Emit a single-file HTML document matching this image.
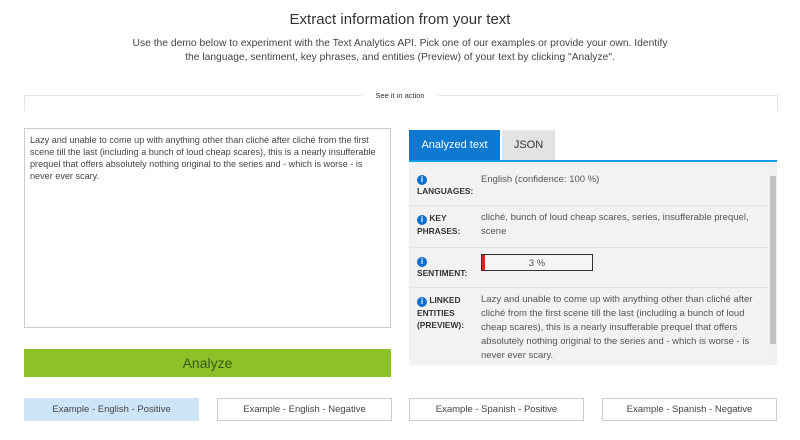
<!DOCTYPE html><html><head><meta charset="utf-8"><style>
body{margin:0;width:800px;height:440px;background:#fff;font-family:"Liberation Sans",sans-serif;color:#333;position:relative;overflow:hidden}
.a{position:absolute}
h1{position:absolute;top:11px;left:0;width:800px;text-align:center;font-size:15px;font-weight:normal;margin:0;color:#333}
.sub{top:37px;left:0;width:800px;text-align:center;font-size:10.3px;line-height:14px;color:#444}
.ta{left:24px;top:128px;width:355px;height:188px;border:1px solid #ccc;padding:5px;font-size:9.1px;line-height:12px;color:#444;white-space:nowrap;overflow:hidden}
.btn{left:24px;top:349px;width:367px;height:28px;background:#8cc129;color:#3a5a10;font-size:14px;text-align:center;line-height:28px}
.tab{top:130px;height:30px;line-height:30px;font-size:11px;text-align:center}
.panel{left:409px;top:162px;width:368px;height:203px;background:#f2f2f2}
.row{position:absolute;left:0;width:359px;border-bottom:1px solid #e2e2e2}
.lab{position:absolute;left:8px;font-size:8.4px;font-weight:bold;line-height:12px;color:#333}
.i{display:inline-block;width:10px;height:10px;border-radius:50%;background:#0c6fd0;color:#fff;font-size:8px;line-height:10px;text-align:center;font-weight:bold;vertical-align:-1px}
.val{position:absolute;left:72px;width:280px;font-size:9.5px;line-height:14px;color:#555}
.eb{top:398px;height:21px;border:1px solid #ccc;font-size:9.5px;line-height:21px;text-align:center;color:#444;width:173px}
</style></head><body>
<h1>Extract information from your text</h1>
<div class="a sub">Use the demo below to experiment with the Text Analytics API. Pick one of our examples or provide your own. Identify<br>the language, sentiment, key phrases, and entities (Preview) of your text by clicking "Analyze".</div>
<div class="a" style="left:24px;top:95px;width:752px;height:15px;border-top:1px solid #e5e5e5;border-left:1px solid #e5e5e5;border-right:1px solid #e5e5e5"></div>
<div class="a" style="left:362px;top:91px;width:76px;background:#fff;text-align:center;font-size:7.5px;color:#333">See it in action</div>
<div class="a ta">Lazy and unable to come up with anything other than cliché after cliché from the first<br>scene till the last (including a bunch of loud cheap scares), this is a nearly insufferable<br>prequel that offers absolutely nothing original to the series and - which is worse - is<br>never ever scary.</div>
<div class="a btn">Analyze</div>
<div class="a tab" style="left:409px;width:91px;background:#0c78d0;color:#fff">Analyzed text</div>
<div class="a tab" style="left:502px;width:53px;background:#e3e3e3;color:#333">JSON</div>
<div class="a" style="left:409px;top:160px;width:368px;height:2px;background:#0a9ee8"></div>
<div class="a panel">
<div class="row" style="top:0;height:43px"><div class="lab" style="top:10px"><span class="i">i</span><br>LANGUAGES:</div><div class="val" style="top:11px">English (confidence: 100 %)</div></div>
<div class="row" style="top:43px;height:42px"><div class="lab" style="top:7px"><span class="i">i</span> KEY<br>PHRASES:</div><div class="val" style="top:6px">cliché, bunch of loud cheap scares, series, insufferable prequel, scene</div></div>
<div class="row" style="top:86px;height:39px"><div class="lab" style="top:6px"><span class="i">i</span><br>SENTIMENT:</div><div class="a" style="left:72px;top:6px;width:110px;height:15px;border:1px solid #333;background:#f5f5f5;font-size:9.4px;text-align:center;line-height:15px;color:#555"><div class="a" style="left:0;top:0;width:3px;height:15px;background:#d42a1a"></div>3 %</div></div>
<div class="row" style="top:126px;height:77px;border:0"><div class="lab" style="top:6px"><span class="i">i</span> LINKED<br>ENTITIES<br>(PREVIEW):</div><div class="val" style="top:5px">Lazy and unable to come up with anything other than cliché after cliché from the first scene till the last (including a bunch of loud cheap scares), this is a nearly insufferable prequel that offers absolutely nothing original to the series and - which is worse - is never ever scary.</div></div>
<div class="a" style="left:360px;top:0;width:8px;height:203px;background:#f0f0f0"><div class="a" style="left:1px;top:14px;width:6px;height:168px;background:#c2c2c2"></div></div>
</div>
<div class="a eb" style="left:24px;background:#cde5f7;border-color:#cde5f7">Example - English - Positive</div>
<div class="a eb" style="left:217px">Example - English - Negative</div>
<div class="a eb" style="left:409px">Example - Spanish - Positive</div>
<div class="a eb" style="left:602px">Example - Spanish - Negative</div>
</body></html>
